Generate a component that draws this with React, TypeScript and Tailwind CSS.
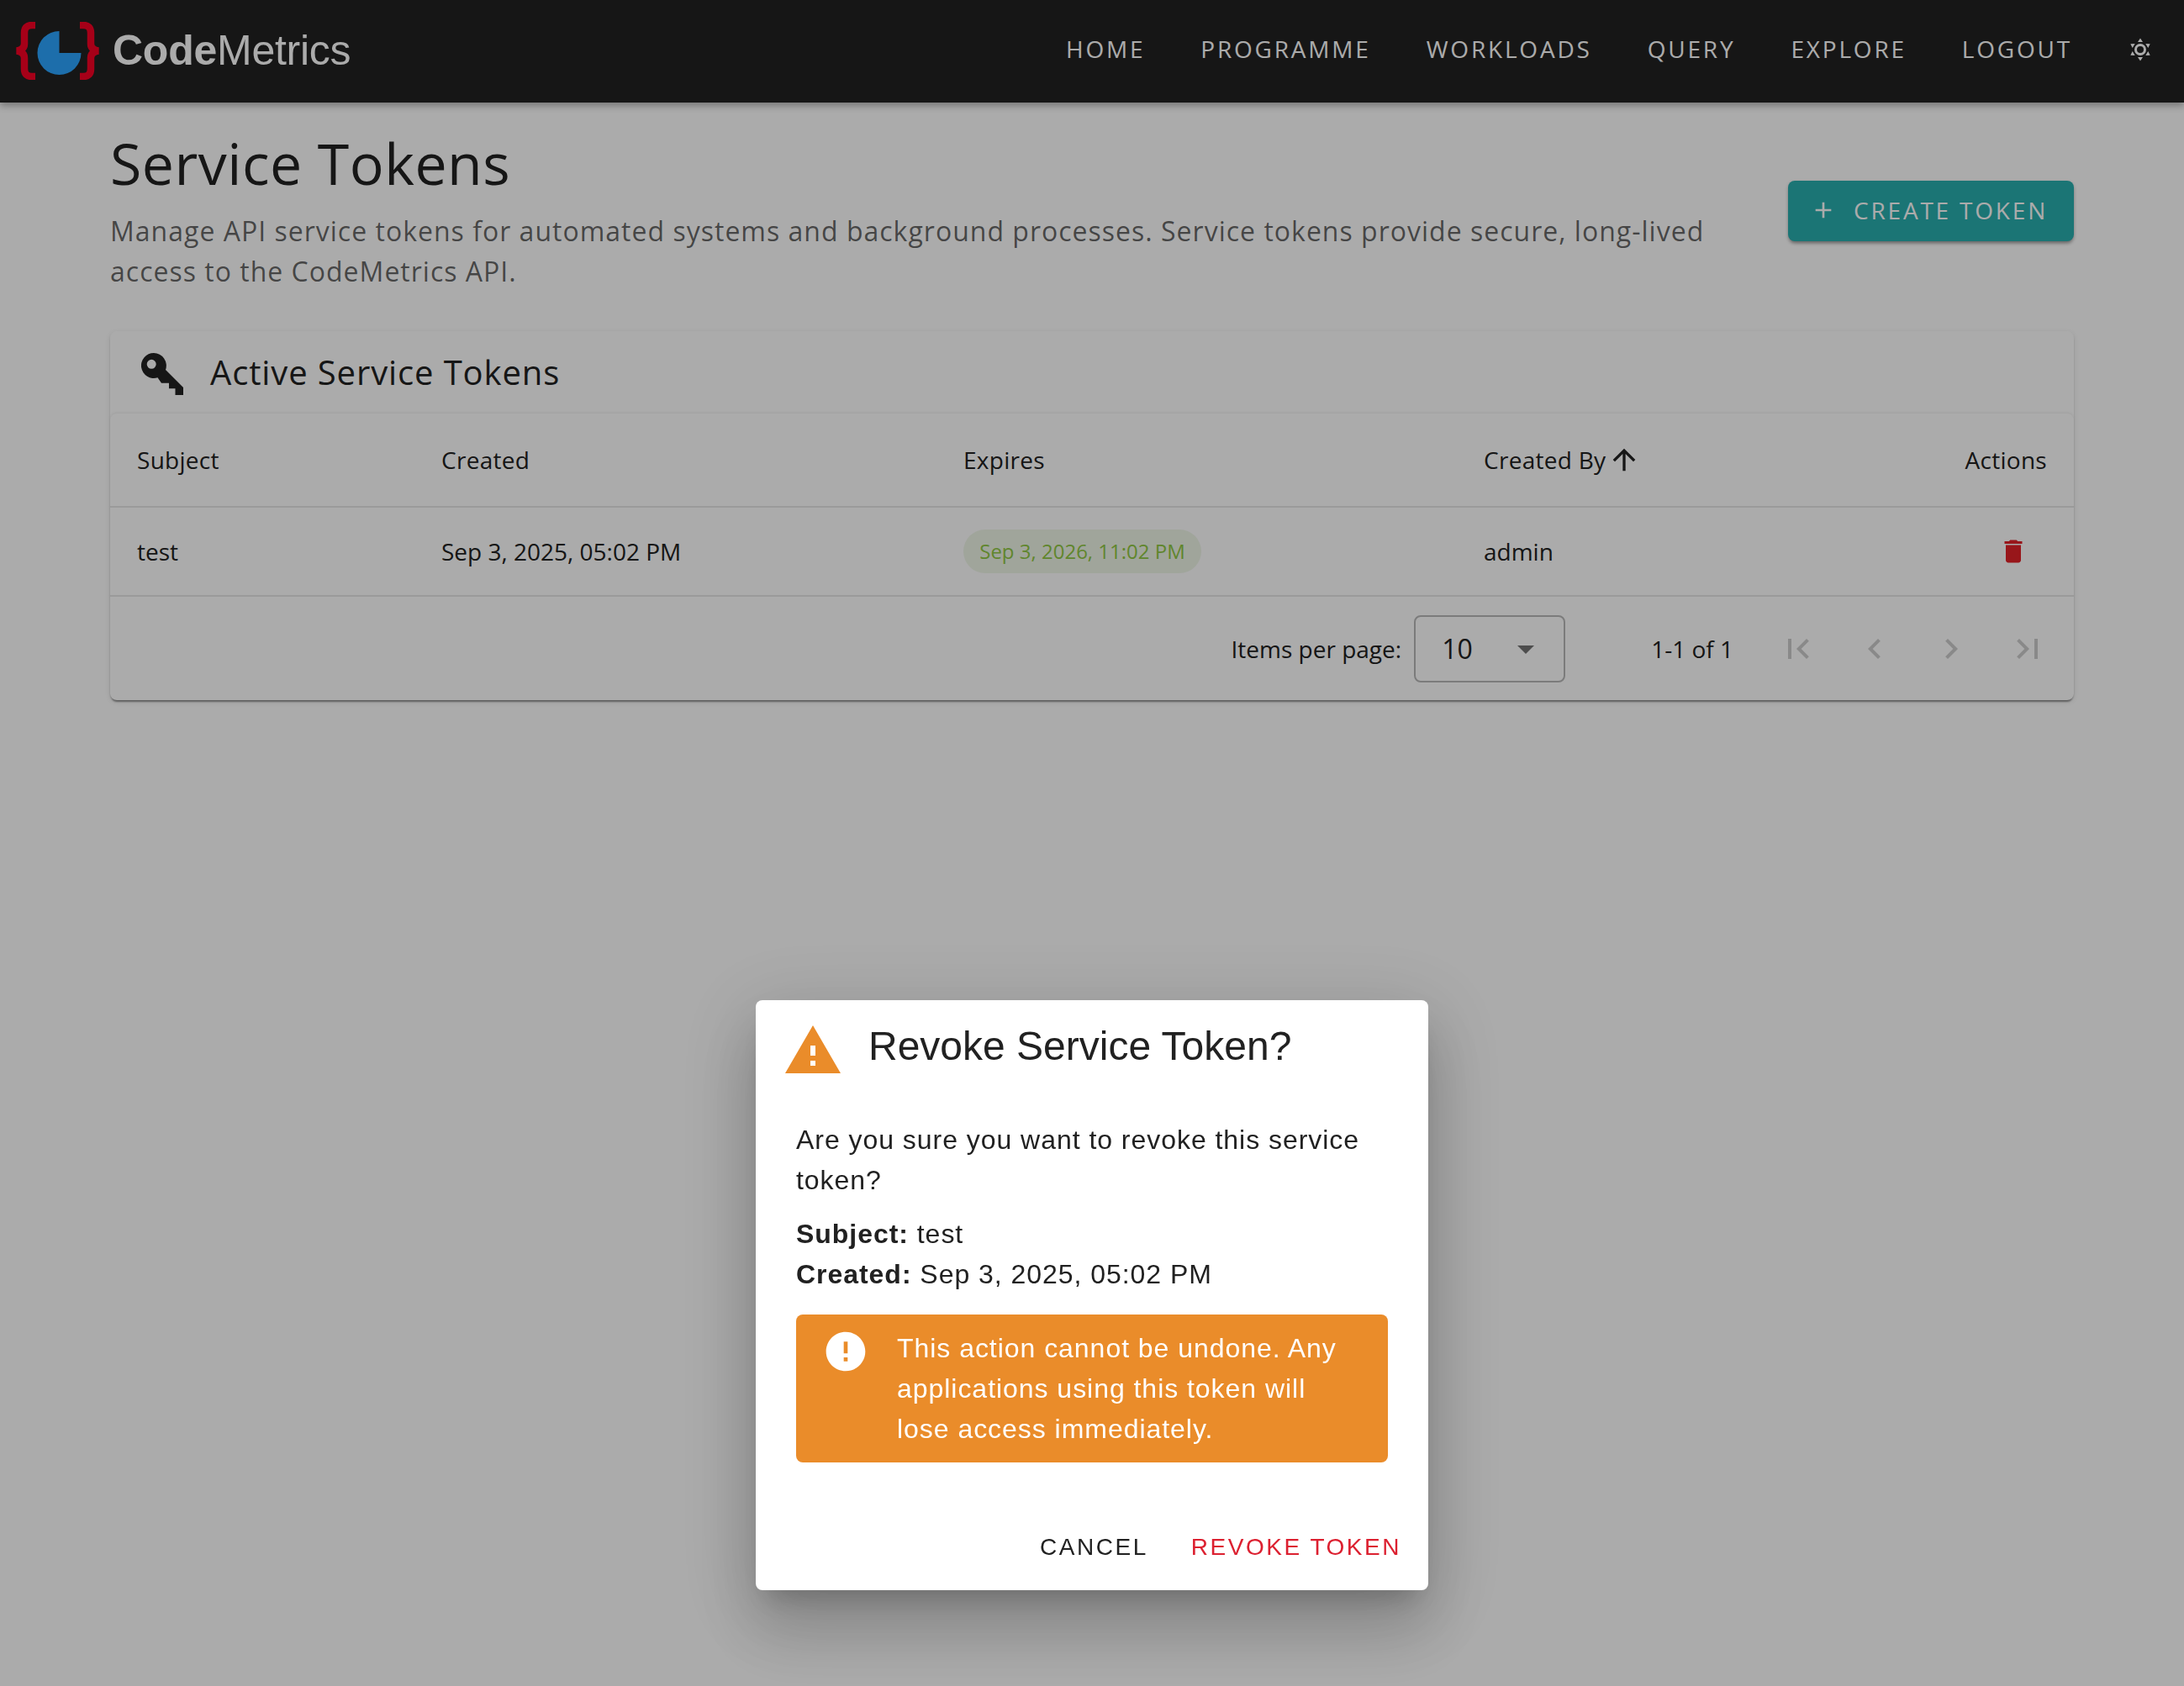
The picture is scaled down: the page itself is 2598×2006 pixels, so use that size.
import type { FC } from 'react';

const navItems = ['HOME', 'PROGRAMME', 'WORKLOADS', 'QUERY', 'EXPLORE', 'LOGOUT'];

const Logo: FC = () => (
  <svg width="101" height="69" viewBox="0 0 101 69" className="block -mt-[2px]">
    <g fill="none" stroke="#f80024" strokeWidth="8.500">
      <path d="M24 4 H20 Q11 4 11 13 V26 Q11 33 2 34.500 Q11 36 11 43 V56 Q11 65 20 65 H24" />
      <path d="M77 4 H81 Q90 4 90 13 V26 Q90 33 99 34.500 Q90 36 90 43 V56 Q90 65 81 65 H77" />
    </g>
    <path d="M52.500 11 A26 26 0 1 0 78.500 37 H52.500 Z" fill="#2ca5ff" />
  </svg>
);

const SunIcon: FC = () => (
  <svg width="28" height="28" viewBox="0 0 28 28" fill="currentColor" className="block">
    <path
      fillRule="evenodd"
      d="M14 7a7 7 0 1 0 0 14 7 7 0 0 0 0-14zm0 3a4 4 0 1 1 0 8 4 4 0 0 1 0-8z"
    />
    {[0, 60, 120, 180, 240, 300].map((deg) => (
      <path key={deg} d="M14 0.500l3 4.500h-6z" transform={`rotate(${deg} 14 14)`} />
    ))}
  </svg>
);

const KeyIcon: FC = () => (
  <svg width="50" height="50" viewBox="0 0 50 50" fill="currentColor" className="block">
    <path
      fillRule="evenodd"
      d="M15 0A15 15 0 0 1 29 20L50 41V50H40.500V42.300H33V35.700H24L19.500 29.300A15 15 0 1 1 15 0ZM12.200 7.800a5.500 5.500 0 1 0 0 11 5.500 5.500 0 0 0 0-11Z"
    />
  </svg>
);

const MuiIcon: FC<{ d: string; size: number; className?: string }> = ({ d, size, className }) => (
  <svg width={size} height={size} viewBox="0 0 24 24" fill="currentColor" className={`block shrink-0 ${className ?? ''}`}>
    <path d={d} />
  </svg>
);

const pagerIcons = [
  'M18.41 16.59 13.82 12l4.59-4.59L17 6l-6 6 6 6zM6 6h2v12H6z',
  'M15.41 7.41 14 6l-6 6 6 6 1.41-1.41L10.83 12z',
  'M10 6 8.59 7.41 13.17 12l-4.58 4.59L10 18l6-6z',
  'M5.59 7.41 10.18 12l-4.59 4.59L7 18l6-6-6-6zM16 6h2v12h-2z',
];

const RevokeDialog: FC = () => (
  <div className="fixed inset-0 flex justify-center items-start pt-[1190px] bg-black/[0.33]">
    <div className="w-[800px] h-[702px] flex flex-col bg-white rounded-[8px] text-[#212121] font-['Liberation_Sans',sans-serif] shadow-[0_22px_30px_-14px_rgba(0,0,0,0.2),0_48px_76px_6px_rgba(0,0,0,0.14),0_18px_92px_16px_rgba(0,0,0,0.12)]">
      <div className="flex items-center pl-[32px] pt-[19px] h-[110px]">
        <MuiIcon size={72} className="text-[#ea8c2a] -mt-[9px]" d="M1 21h22L12 2 1 21zm12-3h-2v-2h2v2zm0-4h-2v-4h2v4z" />
        <h2 className="ml-[30px] -mt-[19px] text-[48px] leading-[60px] font-normal">Revoke Service Token?</h2>
      </div>
      <div className="px-[48px] pt-[32px] text-[32px] leading-[48px] tracking-[0.03em]">
        <p>Are you sure you want to revoke this service token?</p>
        <p className="mt-[16px]">
          <b>Subject:</b> test
        </p>
        <p>
          <b>Created:</b> Sep 3, 2025, 05:02 PM
        </p>
        <div className="mt-[24px] flex h-[176px] bg-[#ea8c2a] rounded-[8px] text-white pl-[31px] pt-[16px]">
          <MuiIcon
            size={56}
            d="M12 2C6.48 2 2 6.48 2 12s4.48 10 10 10 10-4.48 10-10S17.52 2 12 2zm1 15h-2v-2h2v2zm0-4h-2V7h2v6z"
          />
          <p className="ml-[33px] w-[535px]">This action cannot be undone. Any applications using this token will lose access immediately.</p>
        </div>
      </div>
      <div className="flex justify-end gap-[51px] pr-[32px] pt-[77px] text-[28px] leading-[48px] tracking-[0.09em]">
        <span>CANCEL</span>
        <span className="text-[#dc2030]">REVOKE TOKEN</span>
      </div>
    </div>
  </div>
);

export default function App() {
  return (
    <div className="min-h-screen bg-white text-[#212121] font-['Open_Sans',sans-serif]">
      <header className="h-[122px] flex items-center bg-[#212121] text-white pl-[18px] pr-[38px] shadow-[0_4px_8px_rgba(0,0,0,0.3)]">
        <Logo />
        <div className="ml-[15px] -mt-[3px] text-[50px] leading-none tracking-[-0.005em] font-['Liberation_Sans',sans-serif]">
          <b>Code</b>Metrics
        </div>
        <nav className="ml-auto flex items-center gap-[66px] text-[28px] tracking-[0.1em]">
          {navItems.map((item) => (
            <span key={item} className="-mt-[6px]">
              {item}
            </span>
          ))}
          <span className="ml-[1px] -mt-[5px]">
            <SunIcon />
          </span>
        </nav>
      </header>

      <main className="px-[131px] pt-[30px]">
        <div className="flex justify-between items-center">
          <div className="w-[1960px]">
            <h1 className="text-[68px] leading-[84px] font-normal tracking-[0.00735em]">Service Tokens</h1>
            <p className="mt-[15px] text-[32px] leading-[48px] tracking-[0.0315em] text-black/60">
              Manage API service tokens for automated systems and background processes. Service tokens provide secure, long-lived access to the CodeMetrics API.
            </p>
          </div>
          <button className="mt-[2px] w-[340px] h-[72px] flex items-center pl-[28px] pb-[2px] rounded-[8px] bg-[#29afaf] text-white text-[28px] tracking-[0.1em] shadow-[0_4px_4px_-2px_rgba(0,0,0,0.3),0_2px_4px_rgba(0,0,0,0.2)]">
            <MuiIcon size={32} d="M19 13h-6v6h-2v-6H5v-2h6V5h2v6h6v2z" className="-ml-[2px]" />
            <span className="ml-[20px]">CREATE TOKEN</span>
          </button>
        </div>

        <section className="mt-[47px] rounded-[8px] shadow-[0_4px_2px_-2px_rgba(0,0,0,0.3),0_2px_2px_rgba(0,0,0,0.14),0_2px_6px_rgba(0,0,0,0.1)]">
          <div className="h-[98px] flex items-center pl-[37px]">
            <div className="mt-[4px]">
              <KeyIcon />
            </div>
            <h2 className="ml-[32px] text-[40px] font-normal tracking-[0.022em]">Active Service Tokens</h2>
          </div>

          <div className="rounded-[8px] shadow-[0_-1px_3px_rgba(0,0,0,0.07)] text-[28px]">
            <div className="grid grid-cols-[362px_621px_619px_1fr] items-center h-[112px] px-[32px] border-b-2 border-[#e6e6e6] tracking-[0.01em]">
              <span>Subject</span>
              <span>Created</span>
              <span>Expires</span>
              <div className="flex justify-between items-center">
                <span className="flex items-center gap-[2px]">
                  Created By
                  <MuiIcon size={40} d="M4 12l1.410 1.410L11 7.830V20h2V7.830l5.580 5.590L20 12l-8-8-8 8z" />
                </span>
                <span>Actions</span>
              </div>
            </div>

            <div className="grid grid-cols-[362px_621px_619px_1fr] items-center h-[106px] px-[32px] border-b-2 border-[#e6e6e6]">
              <span>test</span>
              <span>Sep 3, 2025, 05:02 PM</span>
              <span className="w-[283px] h-[52px] flex items-center justify-center rounded-full bg-[#7cb342]/12 text-[#8fc844] text-[24px]">
                Sep 3, 2026, 11:02 PM
              </span>
              <div className="flex justify-between items-center">
                <span>admin</span>
                <MuiIcon
                  size={36}
                  className="text-[#e32228] mr-[22px]"
                  d="M6 19c0 1.100.9 2 2 2h8c1.100 0 2-.9 2-2V7H6v12zM19 4h-3.500l-1-1h-5l-1 1H5v2h14V4z"
                />
              </div>
            </div>

            <div className="h-[123px] flex items-center pr-[31px]">
              <span className="ml-auto">Items per page:</span>
              <div className="ml-[15px] w-[180px] h-[80px] flex items-center pl-[31px] border-2 border-black/[0.28] rounded-[8px] text-[32px]">
                10
                <MuiIcon size={48} d="M7 10l5 5 5-5z" className="ml-[39px] text-black/55" />
              </div>
              <span className="ml-[102px]">1-1 of 1</span>
              <div className="ml-[53px] flex gap-[43px] text-black/20">
                {pagerIcons.map((d) => (
                  <MuiIcon key={d} size={48} d={d} />
                ))}
              </div>
            </div>
          </div>
        </section>
      </main>

      <RevokeDialog />
    </div>
  );
}
